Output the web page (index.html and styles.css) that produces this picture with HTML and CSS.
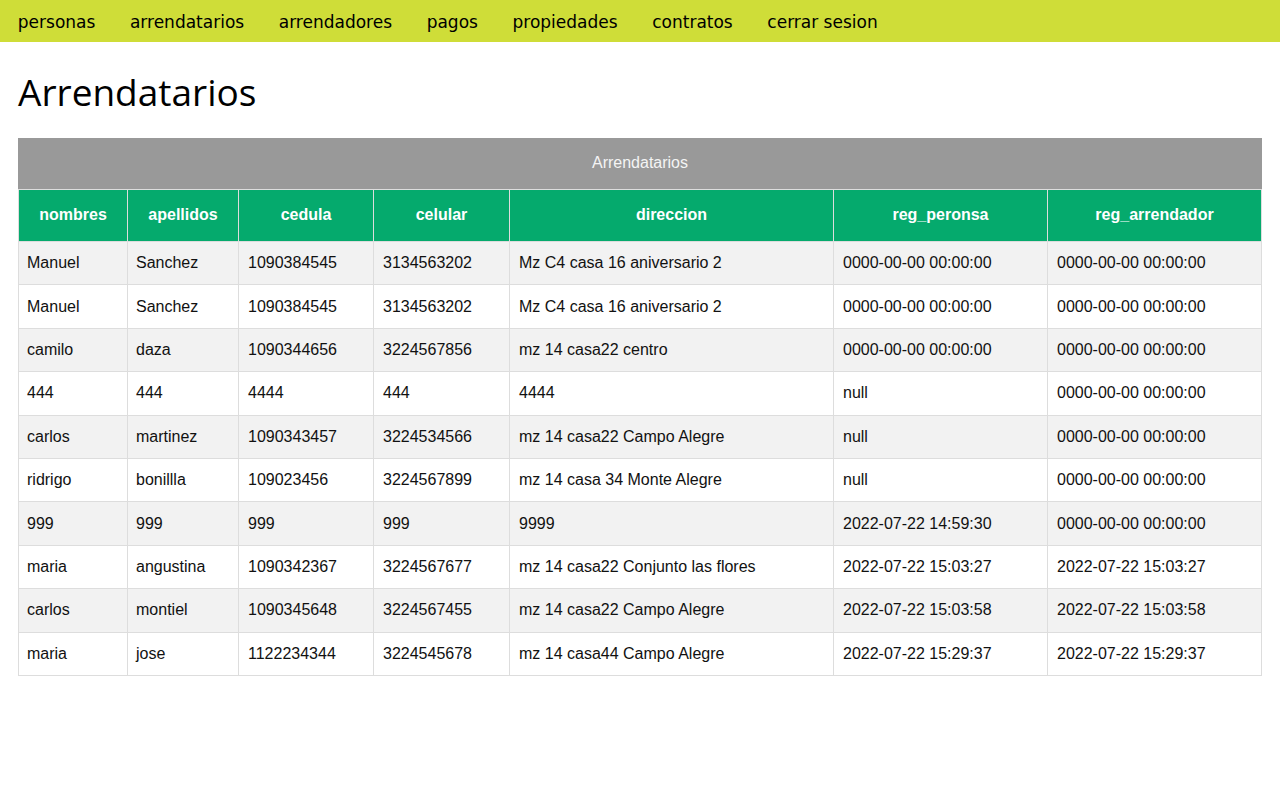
FILE: index.html
```html
<!DOCTYPE html>
<html lang="es">
<head>
<meta charset="utf-8">
<title>Arrendatarios</title>
<link rel="stylesheet" href="styles.css">
</head>
<body>
<nav class="topnav">
  <a href="#">personas</a>
  <a href="#">arrendatarios</a>
  <a href="#">arrendadores</a>
  <a href="#">pagos</a>
  <a href="#">propiedades</a>
  <a href="#">contratos</a>
  <a href="#">cerrar sesion</a>
</nav>
<main class="content">
  <h1 class="title">Arrendatarios</h1>
  <table class="grid">
    <colgroup>
      <col class="c1"><col class="c2"><col class="c3"><col class="c4"><col class="c5"><col class="c6"><col class="c7">
    </colgroup>
    <thead>
      <tr><th colspan="7" class="caption-cell">Arrendatarios</th></tr>
      <tr class="head">
        <th>nombres</th><th>apellidos</th><th>cedula</th><th>celular</th><th>direccion</th><th>reg_peronsa</th><th>reg_arrendador</th>
      </tr>
    </thead>
    <tbody>
      <tr><td>Manuel</td><td>Sanchez</td><td>1090384545</td><td>3134563202</td><td>Mz C4 casa 16 aniversario 2</td><td>0000-00-00 00:00:00</td><td>0000-00-00 00:00:00</td></tr>
      <tr><td>Manuel</td><td>Sanchez</td><td>1090384545</td><td>3134563202</td><td>Mz C4 casa 16 aniversario 2</td><td>0000-00-00 00:00:00</td><td>0000-00-00 00:00:00</td></tr>
      <tr><td>camilo</td><td>daza</td><td>1090344656</td><td>3224567856</td><td>mz 14 casa22 centro</td><td>0000-00-00 00:00:00</td><td>0000-00-00 00:00:00</td></tr>
      <tr><td>444</td><td>444</td><td>4444</td><td>444</td><td>4444</td><td>null</td><td>0000-00-00 00:00:00</td></tr>
      <tr><td>carlos</td><td>martinez</td><td>1090343457</td><td>3224534566</td><td>mz 14 casa22 Campo Alegre</td><td>null</td><td>0000-00-00 00:00:00</td></tr>
      <tr><td>ridrigo</td><td>bonillla</td><td>109023456</td><td>3224567899</td><td>mz 14 casa 34 Monte Alegre</td><td>null</td><td>0000-00-00 00:00:00</td></tr>
      <tr><td>999</td><td>999</td><td>999</td><td>999</td><td>9999</td><td>2022-07-22 14:59:30</td><td>0000-00-00 00:00:00</td></tr>
      <tr><td>maria</td><td>angustina</td><td>1090342367</td><td>3224567677</td><td>mz 14 casa22 Conjunto las flores</td><td>2022-07-22 15:03:27</td><td>2022-07-22 15:03:27</td></tr>
      <tr><td>carlos</td><td>montiel</td><td>1090345648</td><td>3224567455</td><td>mz 14 casa22 Campo Alegre</td><td>2022-07-22 15:03:58</td><td>2022-07-22 15:03:58</td></tr>
      <tr><td>maria</td><td>jose</td><td>1122234344</td><td>3224545678</td><td>mz 14 casa44 Campo Alegre</td><td>2022-07-22 15:29:37</td><td>2022-07-22 15:29:37</td></tr>
    </tbody>
  </table>
</main>
</body>
</html>
```

FILE: styles.css
```css
html, body {
  margin: 0;
  padding: 0;
  background: #ffffff;
}

.topnav {
  display: flex;
  align-items: center;
  height: 42px;
  background: #cfdd38;
  padding-left: 0.5px;
}

.topnav a {
  font-family: "DejaVu Sans", Verdana, sans-serif;
  font-size: 17px;
  color: #000000;
  text-decoration: none;
  padding: 2px 17.3px 0;
  line-height: 40px;
}

.content {
  padding: 0 18px;
}

.title {
  font-family: "Open Sans", "Noto Sans", sans-serif;
  font-weight: 400;
  font-size: 37px;
  margin: 24px 0 20px;
  line-height: 52px;
  color: #000000;
}

.grid {
  width: 100%;
  border-collapse: collapse;
  table-layout: fixed;
  font-family: "Liberation Sans", Arial, sans-serif;
  font-size: 16px;
}

.c1 { width: 109px; }
.c2 { width: 111px; }
.c3 { width: 135px; }
.c4 { width: 136px; }
.c5 { width: 324px; }
.c6 { width: 214px; }
.c7 { width: auto; }

.caption-cell {
  background: #999999;
  color: #f4f4f4;
  font-weight: 400;
  height: 48px;
  padding: 0 0 2px;
  border: 1px solid #999999;
  border-bottom: 1px solid #dddddd;
}

.head th {
  background: #05aa6d;
  color: #ffffff;
  font-weight: 700;
  height: 49px;
  padding: 0 8px 2px;
  border: 1px solid #dddddd;
}

.grid td {
  border: 1px solid #dddddd;
  padding: 0 8px;
  height: 42.4px;
  color: #111111;
  text-align: left;
}

.grid td:nth-child(n+3) {
  padding-left: 9px;
}

.grid tbody tr:nth-child(odd) td {
  background: #f2f2f2;
}
```
